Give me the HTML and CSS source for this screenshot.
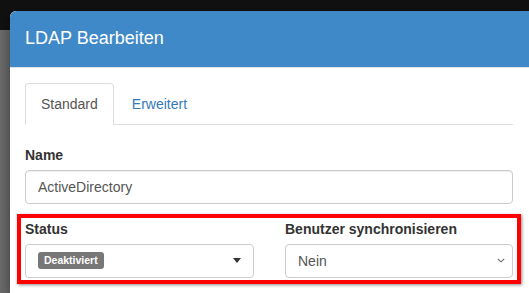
FILE: index.html
```html
<!DOCTYPE html>
<html lang="de">

<head>
    <meta charset="UTF-8">
    <meta name="viewport" content="width=device-width, initial-scale=1.0">
    <title>LDAP Bearbeiten</title>
    <link rel="stylesheet" href="styles.css">
</head>

<body>
    <div class="topbar"></div>

    <!-- Dialog -->
    <div class="modal" role="dialog" aria-labelledby="modal-title">
        <div class="modal-header">
            <h4 class="modal-title" id="modal-title">LDAP Bearbeiten</h4>
        </div>

        <div class="modal-body">
            <ul class="nav-tabs">
                <li class="active"><a href="#standard">Standard</a></li>
                <li><a href="#erweitert">Erweitert</a></li>
            </ul>

            <div class="tab-content">
                <div class="form-group">
                    <label for="ldap-name">Name</label>
                    <input type="text" id="ldap-name" class="form-control" value="ActiveDirectory">
                </div>

                <!-- Markierter Bereich -->
                <div class="highlight">
                    <div class="form-group">
                        <label>Status</label>
                        <div class="select-box" role="combobox" tabindex="0">
                            <span class="badge">Deaktiviert</span>
                            <span class="caret"></span>
                        </div>
                    </div>
                    <div class="form-group">
                        <label>Benutzer synchronisieren</label>
                        <div class="select-box native" role="combobox" tabindex="0">
                            <span class="select-value">Nein</span>
                            <svg class="chevron" width="8" height="5" viewBox="0 0 8 5" aria-hidden="true">
                                <path d="M0.8 0.8 L4 3.8 L7.2 0.8" fill="none" stroke="#666" stroke-width="1.1" />
                            </svg>
                        </div>
                    </div>
                </div>
            </div>
        </div>
    </div>
</body>

</html>
```

FILE: styles.css
```css
html,
body {
    margin: 0;
    height: 100%;
    overflow: hidden;
}

body {
    font-family: "Liberation Sans", Arial, sans-serif;
    font-size: 14px;
    line-height: 20px;
    color: #333;
    background-color: #6e6e6e;
}

.topbar {
    height: 30px;
    background-color: #111;
}

/* Dialog ligt over de pagina */
.modal {
    position: absolute;
    top: 11px;
    left: 10px;
    right: 0;
    bottom: 0;
    overflow: hidden;
    background-color: #fff;
    border-radius: 6px 0 0 0;
    box-shadow: 0 5px 15px rgba(0, 0, 0, 0.5);
}

.modal-header {
    background-color: #3f89c8;
    padding: 15px;
    border-bottom: 1px solid #e5e5e5;
    border-radius: 6px 0 0 0;
}

.modal-title {
    margin: 0;
    font-size: 18px;
    font-weight: normal;
    line-height: 25.7px;
    color: #fff;
}

.modal-body {
    padding: 15px 16px 15px 15px;
}

/* Tabs */
.nav-tabs {
    display: flex;
    list-style: none;
    margin: 0;
    padding: 0;
    border-bottom: 1px solid #ddd;
}

.nav-tabs li {
    margin-bottom: -1px;
}

.nav-tabs a {
    display: block;
    padding: 10px 15px;
    margin-right: 2px;
    border: 1px solid transparent;
    border-radius: 4px 4px 0 0;
    color: #337ab7;
    text-decoration: none;
}

.nav-tabs li.active a {
    color: #555;
    background-color: #fff;
    border-color: #ddd #ddd transparent;
}

.tab-content {
    padding-top: 20px;
}

/* Formulier */
.form-group {
    margin-bottom: 10px;
}

label {
    display: block;
    margin-bottom: 5px;
    font-weight: bold;
}

.form-control {
    display: block;
    width: 100%;
    height: 34px;
    box-sizing: border-box;
    padding: 6px 12px;
    font-family: inherit;
    font-size: 14px;
    line-height: 20px;
    color: #555;
    border: 1px solid #ccc;
    border-radius: 4px;
    box-shadow: inset 0 1px 1px rgba(0, 0, 0, 0.075);
}

.highlight {
    display: grid;
    grid-template-columns: 229px 1fr;
    column-gap: 31px;
    margin: 0 -8px 10px;
    padding: 1px 4px 2px 4px;
    border: 4px solid #f00;
    box-shadow: 1px 1px 3px rgba(0, 0, 0, 0.45);
}

.highlight .form-group {
    margin-bottom: 0;
}

.select-box {
    display: flex;
    align-items: center;
    height: 34px;
    box-sizing: border-box;
    padding: 0 12px;
    border: 1px solid #ccc;
    border-radius: 4px;
    background-color: #fff;
}

.badge {
    display: inline-block;
    padding: 3px 6px;
    font-size: 10.5px;
    font-weight: bold;
    line-height: 11px;
    color: #fff;
    background-color: #777;
    border-radius: 3px;
}

.caret {
    margin-left: auto;
    width: 0;
    height: 0;
    border-top: 5px solid #333;
    border-left: 4px solid transparent;
    border-right: 4px solid transparent;
}

.select-value {
    color: #555;
}

.chevron {
    margin-left: auto;
    margin-right: -5px;
}
```
